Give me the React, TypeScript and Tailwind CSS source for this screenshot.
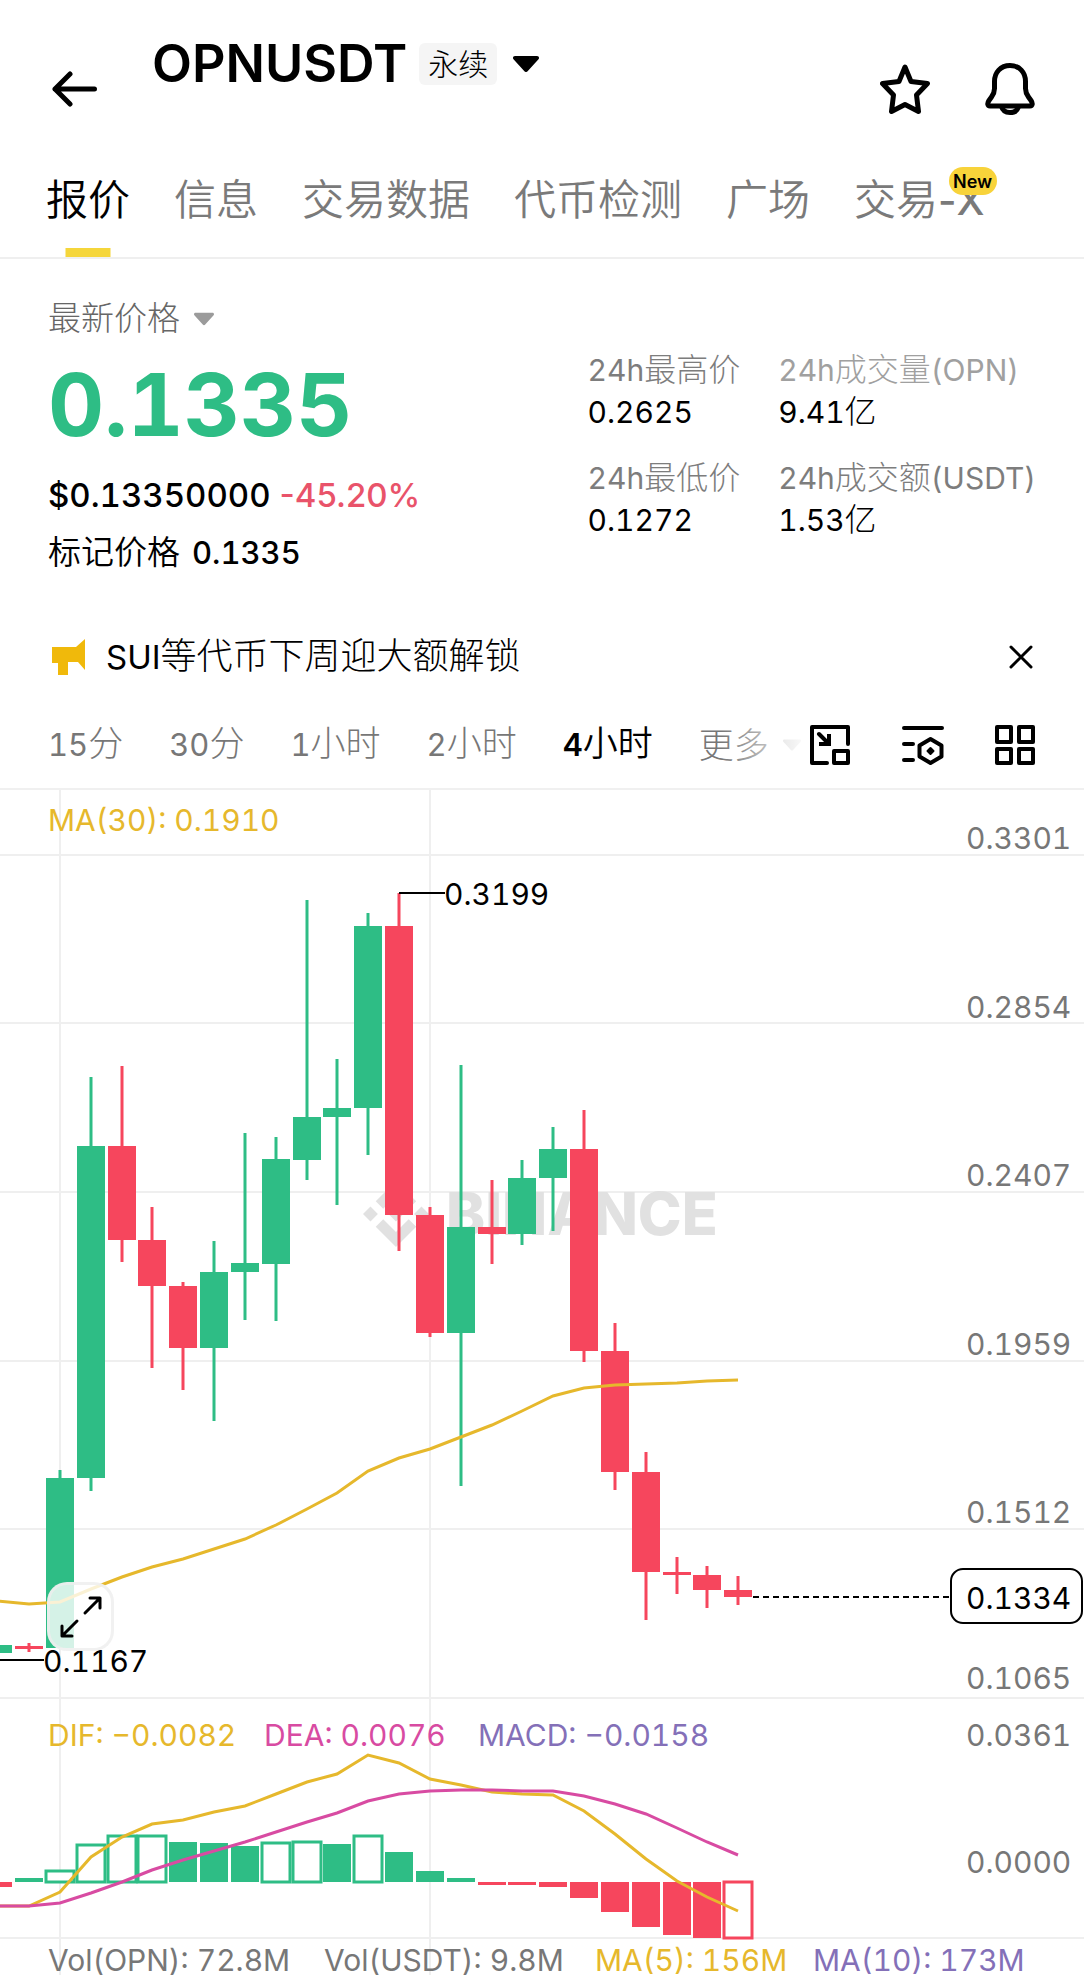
import React from 'react'
import clsx from 'clsx'

const UP = '#2ebd85'
const DOWN = '#f6465d'
const YELLOW = '#e6b82c'
const PINK = '#d84ba2'
const PURPLE = '#8470b8'

const TABS = ['报价', '信息', '交易数据', '代币检测', '广场']

const STATS = [
  { label: '24h最高价', value: '0.2625', muted: false },
  { label: '24h成交量(OPN)', value: '9.41亿', muted: true },
  { label: '24h最低价', value: '0.1272', muted: false },
  { label: '24h成交额(USDT)', value: '1.53亿', muted: false },
]

const INTERVALS = ['15分', '30分', '1小时', '2小时', '4小时']

// the chart is drawn in one coordinate space that starts below the toolbar
const CHART_TOP = 790
const CHART_BOTTOM = 1975
const CHART_WIDTH = 1084
const ZERO = 1882

const slotX = (i: number) => Math.round(60 + (i - 2) * 30.83)

// [is up, high, body top, body bottom, low]
const CANDLES: [boolean, number, number, number, number][] = [
  [true, 1645, 1645, 1653, 1653],
  [false, 1643, 1646, 1649, 1652],
  [true, 1470, 1478, 1648, 1648],
  [true, 1077, 1146, 1478, 1491],
  [false, 1066, 1146, 1240, 1262],
  [false, 1207, 1240, 1286, 1368],
  [false, 1282, 1286, 1348, 1390],
  [true, 1241, 1272, 1348, 1421],
  [true, 1133, 1263, 1272, 1320],
  [true, 1137, 1159, 1264, 1321],
  [true, 900, 1117, 1160, 1180],
  [true, 1059, 1108, 1117, 1205],
  [true, 913, 926, 1108, 1155],
  [false, 893, 926, 1215, 1251],
  [false, 1207, 1215, 1333, 1337],
  [true, 1065, 1227, 1333, 1486],
  [false, 1180, 1227, 1234, 1264],
  [true, 1160, 1178, 1234, 1245],
  [true, 1127, 1149, 1178, 1231],
  [false, 1110, 1149, 1351, 1362],
  [false, 1323, 1351, 1472, 1490],
  [false, 1452, 1472, 1572, 1620],
  [false, 1557, 1572, 1575, 1594],
  [false, 1566, 1575, 1590, 1608],
  [false, 1576, 1590, 1597, 1605],
]

const MA30 = [
  1601, 1604, 1602, 1589, 1577, 1567, 1559, 1549, 1539, 1525, 1509, 1493, 1471,
  1458, 1449, 1437, 1425, 1411, 1396, 1388, 1385, 1384, 1383, 1381, 1380,
]

// [end of the bar, hollow]
const MACD: [number, boolean][] = [
  [1887, false],
  [1878, false],
  [1871, true],
  [1845, true],
  [1836, true],
  [1836, true],
  [1842, false],
  [1843, false],
  [1846, false],
  [1843, true],
  [1842, true],
  [1844, false],
  [1836, true],
  [1852, false],
  [1871, false],
  [1878, false],
  [1885, false],
  [1885, false],
  [1887, false],
  [1898, false],
  [1912, false],
  [1927, false],
  [1935, false],
  [1938, false],
  [1938, true],
]

const DIF = [
  1906, 1906, 1892, 1857, 1837, 1824, 1820, 1812, 1806, 1794, 1782, 1774, 1755,
  1763, 1779, 1785, 1792, 1794, 1795, 1811, 1834, 1859, 1881, 1897, 1911,
]

const DEA = [
  1906, 1906, 1903, 1893, 1882, 1870, 1860, 1851, 1842, 1832, 1822, 1813, 1801,
  1794, 1791, 1790, 1790, 1791, 1791, 1796, 1804, 1814, 1828, 1842, 1855,
]

const GRID_Y = [855, 1023, 1192, 1361, 1529, 1698, 1938]

const AXIS = [
  { text: '0.3301', y: 849 },
  { text: '0.2854', y: 1018 },
  { text: '0.2407', y: 1186 },
  { text: '0.1959', y: 1355 },
  { text: '0.1512', y: 1523 },
  { text: '0.1065', y: 1689 },
  { text: '0.0361', y: 1746 },
  { text: '0.0000', y: 1873 },
]

const LEGENDS = [
  { text: 'MA(30): 0.1910', x: 48, y: 831, color: YELLOW },
  { text: 'DIF: −0.0082', x: 48, y: 1746, color: YELLOW },
  { text: 'DEA: 0.0076', x: 264, y: 1746, color: PINK },
  { text: 'MACD: −0.0158', x: 478, y: 1746, color: PURPLE },
  { text: 'Vol(OPN): 72.8M', x: 48, y: 1971, color: '#777' },
  { text: 'Vol(USDT): 9.8M', x: 324, y: 1971, color: '#777' },
  { text: 'MA(5): 156M', x: 595, y: 1971, color: YELLOW },
  { text: 'MA(10): 173M', x: 813, y: 1971, color: PURPLE },
]

const toPoints = (ys: number[]) => ys.map((y, i) => `${slotX(i)},${y}`).join(' ')

// Chinese runs are set a little larger and lighter than the latin ones
const Mixed = ({ text, zh }: { text: string; zh: string }) => (
  <>
    {text.split(/([\u4e00-\u9fff]+)/).map((part, i) =>
      i % 2 ? (
        <span key={i} className={clsx('leading-none', zh)}>
          {part}
        </span>
      ) : (
        part
      )
    )}
  </>
)

const Caret = ({ className }: { className: string }) => (
  <svg viewBox="0 0 26 16" className={className} fill="currentColor">
    <path d="M2 0h22c1.800 0 2.600 1.800 1.500 3.200L14.600 15.200c-.9 1.100-2.300 1.100-3.200 0L.5 3.200C-.6 1.800.2 0 2 0z" />
  </svg>
)

const Header = () => (
  <header className="flex h-[140px] items-center pt-[38px] pr-12 pl-[52px]">
    <button aria-label="返回">
      <svg width="46" height="36" viewBox="0 0 46 36" fill="none" stroke="currentColor" strokeWidth="5" strokeLinecap="round" strokeLinejoin="round">
        <path d="M18 3L3 18l15 15M3 18h39.500" />
      </svg>
    </button>
    <button className="ml-[54px] flex h-[52px] items-center self-start">
      <h1 className="text-[52px] leading-none font-semibold">OPNUSDT</h1>
      <span className="ml-3 flex h-[42px] items-center rounded-md bg-[#f5f5f5] px-[9px] text-[30px] font-light">
        永续
      </span>
      <Caret className="ml-4 h-4 w-[26px]" />
    </button>
    <div className="ml-auto flex items-center gap-[52px]">
      <button aria-label="收藏">
        <svg width="52" height="52" viewBox="0 0 52 52" fill="none" stroke="currentColor" strokeWidth="5" strokeLinejoin="round">
          <path d="M25 4l6 14.500L47.500 20.500 36.500 32l2 16.500L25 41.500 11.500 48.500l2-16.500L2.500 20.500 19 18.500z" />
        </svg>
      </button>
      <button aria-label="提醒">
        <svg width="52" height="54" viewBox="0 0 52 54" fill="none" stroke="currentColor" strokeWidth="5" strokeLinejoin="round">
          <path d="M26 3.500c-9.500 0-15.500 7-15.500 16v7c0 3.500-1.200 6-3 8.500l-2.500 3.500c-2 3-1.500 5.500 1 5.500h40c2.500 0 3-2.500 1-5.500L44.500 35c-1.800-2.500-3-5-3-8.500v-7c0-9-6-16-15.500-16z" />
          <path d="M17.500 44.500c1 4 4.500 6 8.500 6s7.500-2 8.500-6" />
        </svg>
      </button>
    </div>
  </header>
)

const TabBar = () => (
  <nav className="flex h-[119px] gap-11 border-b-2 border-[#efefef] pl-[46px] text-[42px] font-[350] whitespace-nowrap text-[#7a7a7a]">
    {TABS.map((name, i) => (
      <button key={name} className={clsx('relative pt-0.5', i === 0 && 'text-black')}>
        {name}
        {i === 0 && (
          <span className="absolute bottom-0 left-1/2 h-[9px] w-[45px] -translate-x-1/2 bg-[#f5d63b]" />
        )}
      </button>
    ))}
    <button className="relative pt-0.5">
      交易<span className="text-[40px] font-medium proportional-nums">-X</span>
      <span className="absolute top-[27px] -right-3 flex h-7 w-12 items-center justify-center rounded-[14px] bg-[#f8d33a] text-[18px] font-semibold text-black">
        New
      </span>
    </button>
  </nav>
)

const Summary = () => (
  <section className="flex justify-between px-12 pt-10">
    <div>
      <button className="flex h-10 items-center text-[33px] font-light text-[#666]">
        最新价格
        <Caret className="ml-3.5 h-3.5 w-5 text-[#9b9b9b]" />
      </button>
      <p className="mt-3 text-[87px] leading-[108px] font-bold text-[#2ebd85]">0.1335</p>
      <p className="mt-4 text-[33px] leading-10 font-medium">
        $0.13350000 <span className="text-[#e9536a] proportional-nums">-45.20%</span>
      </p>
      <p className="mt-[18px] flex h-10 items-center gap-3 text-[31px] font-medium">
        <span className="text-[33px] font-[350]">标记价格</span>
        0.1335
      </p>
    </div>
    <dl className="mt-[50px] grid grid-cols-[auto_auto] content-start gap-x-[38px] gap-y-6 text-[30px] leading-[42px]">
      {STATS.map(({ label, value, muted }) => (
        <div key={label}>
          <dt className={clsx(muted ? 'text-[#a0a0a0]' : 'text-[#7d7d7d]')}>
            <Mixed text={label} zh="text-[32px] font-light" />
          </dt>
          <dd>
            <Mixed text={value} zh="text-[32px] font-light" />
          </dd>
        </div>
      ))}
    </dl>
  </section>
)

const Notice = () => (
  <div className="mt-16 flex h-10 items-center pr-[51px] pl-[52px]">
    <svg width="34" height="36" viewBox="0 0 34 36" fill="#f0b90b" className="mr-5">
      <path d="M0 8h24l9-8v31l-7-8H16v13H6V24H0z" />
    </svg>
    <a href="#notice" className="text-[33px] leading-10">
      <Mixed text="SUI等代币下周迎大额解锁" zh="text-[36px] font-light" />
    </a>
    <button aria-label="关闭" className="ml-auto">
      <svg width="24" height="24" viewBox="0 0 24 24" stroke="currentColor" strokeWidth="3" strokeLinecap="round">
        <path d="M2 2l20 20M22 2L2 22" />
      </svg>
    </button>
  </div>
)

const Toolbar = () => (
  <div className="mt-11 flex h-[69px] justify-between border-b-2 border-[#f0f0f0] pr-12 pb-[19px] pl-12">
    <div className="relative flex items-center gap-[46px] text-[31px] whitespace-nowrap text-[#777]">
      {INTERVALS.map((name) => (
        <button key={name} className={clsx(name === '4小时' && 'font-semibold text-black')}>
          <Mixed text={name} zh={name === '4小时' ? 'text-[35px] font-[350]' : 'text-[35px] font-light'} />
        </button>
      ))}
      <button className="flex items-center text-[35px] font-light">
        更多
        <Caret className="ml-3.5 h-4 w-[18px] text-[#bbb]" />
      </button>
      <span className="pointer-events-none absolute inset-y-0 right-0 w-20 bg-linear-to-r from-white/0 to-white/90" />
    </div>
    <div className="flex items-center gap-[50px]">
      <button aria-label="小窗">
        <svg width="42" height="42" viewBox="0 0 42 42" fill="none" stroke="currentColor" strokeWidth="4" strokeLinejoin="round" strokeLinecap="round">
          <path d="M39 20V3H3v36h15M25 27h14v12H25zM10 10l10 10" />
          <path d="M10 20h10V10" strokeLinecap="butt" strokeLinejoin="miter" />
        </svg>
      </button>
      <button aria-label="指标">
        <svg width="43" height="42" viewBox="0 0 43 42" fill="none" stroke="currentColor" strokeWidth="4" strokeLinejoin="round" strokeLinecap="round">
          <path d="M3 4h38M3 20h9M3 36h9M29.500 15l11 6.500v11l-11 6.500-11-6.500v-11z" />
          <path d="M29.500 24l3 3-3 3-3-3z" fill="currentColor" strokeWidth="2" />
        </svg>
      </button>
      <button aria-label="布局">
        <svg width="42" height="42" viewBox="0 0 42 42" fill="none" stroke="currentColor" strokeWidth="4" strokeLinejoin="round">
          <path d="M3 3h14v15H3zM25 3h14v15H25zM3 25h14v14H3zM25 25h14v14H25z" />
        </svg>
      </button>
    </div>
  </div>
)

const Chart = () => (
  <div className="relative">
    <svg
      className="block w-full text-[30px]"
      viewBox={`0 ${CHART_TOP} ${CHART_WIDTH} ${CHART_BOTTOM - CHART_TOP}`}
    >
      <g stroke="#efefef" strokeWidth="2">
        {GRID_Y.map((y) => (
          <line key={y} x1="0" x2={CHART_WIDTH} y1={y} y2={y} />
        ))}
        <line x1="60" x2="60" y1={CHART_TOP} y2={CHART_BOTTOM} />
        <line x1="430" x2="430" y1={CHART_TOP} y2={CHART_BOTTOM} />
      </g>

      {/* watermark */}
      <g fill="#e1e1e1">
        <path
          transform="translate(363 1181) scale(2.75)"
          d="M16.624 13.9202l2.7175 2.7154-7.353 7.353-7.353-7.352 2.7175-2.7164 4.6355 4.6595 4.6356-4.6595zm4.6366-4.6366L24 12l-2.7154 2.7164L18.5682 12l2.6924-2.7164zm-9.272.001l2.7163 2.6914-2.7164 2.7174v-.001L9.2721 12l2.7164-2.7154zm-9.2722-.001L5.4088 12l-2.6914 2.6924L0 12l2.7164-2.7164zM11.9885.0115l7.353 7.329-2.7174 2.7154-4.6356-4.6356-4.6355 4.6595-2.7174-2.7154 7.353-7.353z"
        />
        <text x="446" y="1235" fontSize="59" fontWeight="800">
          BINANCE
        </text>
      </g>

      {CANDLES.map(([up, high, top, bottom, low], i) => (
        <g key={i} fill={up ? UP : DOWN}>
          <rect x={slotX(i) - 1.5} y={high} width="3" height={low - high} />
          <rect x={slotX(i) - 14} y={top} width="28" height={bottom - top} />
        </g>
      ))}
      <polyline points={toPoints(MA30)} fill="none" stroke={YELLOW} strokeWidth="3" />

      {/* MACD */}
      {MACD.map(([end, hollow], i) => {
        const color = end < ZERO ? UP : DOWN
        return (
          <rect
            key={i}
            x={slotX(i) - 14}
            y={Math.min(end, ZERO)}
            width="28"
            height={Math.abs(end - ZERO)}
            fill={hollow ? '#fff' : color}
            stroke={hollow ? color : 'none'}
            strokeWidth="3"
          />
        )
      })}
      <polyline points={toPoints(DIF)} fill="none" stroke={YELLOW} strokeWidth="3" />
      <polyline points={toPoints(DEA)} fill="none" stroke={PINK} strokeWidth="3" />

      {/* highest, lowest and last price */}
      <g stroke="#000" strokeWidth="2">
        <line x1="399" x2="445" y1="893" y2="893" />
        <line x1="0" x2="44" y1="1660" y2="1660" />
        <line x1="753" x2="951" y1="1597" y2="1597" strokeDasharray="6 4" />
        <rect x="951" y="1569" width="131" height="54" rx="12" fill="#fff" />
      </g>
      <text x="444" y="905">0.3199</text>
      <text x="43" y="1672">0.1167</text>
      <text x="966" y="1609">0.1334</text>

      <g fill="#777">
        {AXIS.map(({ text, y }) => (
          <text key={text} x="966" y={y}>
            {text}
          </text>
        ))}
      </g>

      {LEGENDS.map(({ text, x, y, color }) => (
        <text key={text} x={x} y={y} fill={color}>
          {text}
        </text>
      ))}
    </svg>
    <button
      aria-label="全屏"
      className="absolute top-[792px] left-[47px] flex h-[69px] w-[67px] items-center justify-center rounded-[20px] border-[3px] border-[#eee]/80 bg-white/80"
    >
      <svg width="44" height="44" viewBox="0 0 44 44" fill="none" stroke="currentColor" strokeWidth="3" strokeLinecap="round" strokeLinejoin="round">
        <path d="M26 18L41 3M31 3h10v10M18 26L3 41M3 31v10h10" />
      </svg>
    </button>
  </div>
)

const App = () => (
  <main className="overflow-hidden bg-white font-['Inter','Noto_Sans_CJK_SC',sans-serif] text-black tabular-nums">
    <Header />
    <TabBar />
    <Summary />
    <Notice />
    <Toolbar />
    <Chart />
  </main>
)

export default App
